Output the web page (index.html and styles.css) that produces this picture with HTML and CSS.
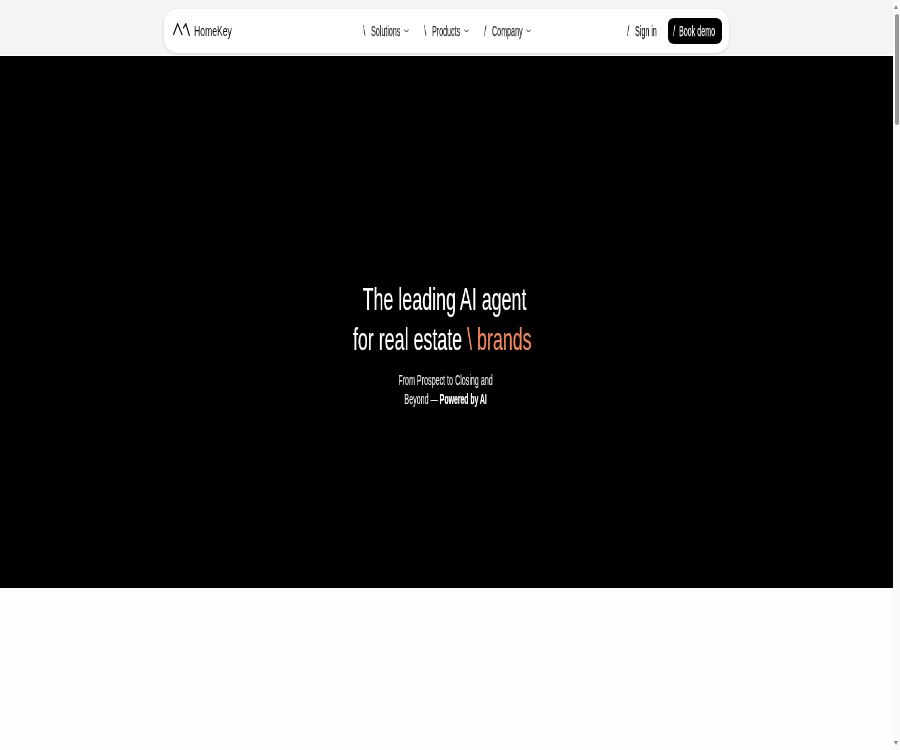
FILE: index.html
```html
<!DOCTYPE html>
<html lang="en">
<head>
    <meta charset="UTF-8">
    <meta name="viewport" content="width=device-width, initial-scale=1.0">
    <title>HomeKey</title>
    <link rel="stylesheet" href="styles.css">
</head>
<body>

<div class="page">
    <header class="top-bar">
        <nav class="nav-card">
            <a class="logo" href="#">
                <svg class="logo-mark" width="17" height="14" viewBox="0 0 17 14" fill="none" stroke="#111" stroke-width="1.2">
                    <path d="M0.4 12 L4.6 0.8 L9.2 12"/>
                    <path d="M10.2 5.4 L12.8 0.8 L16.5 13"/>
                </svg>
                <span class="squeeze logo-text">HomeKey</span>
            </a>
            <ul class="nav-links">
                <li class="nav-item">
                    <span class="slash">\</span>
                    <span class="squeeze w-solutions">Solutions</span>
                    <svg class="chevron" width="5" height="4" viewBox="0 0 5 4" fill="none" stroke="#333"><path d="M0.3 0.6 L2.5 3 L4.7 0.6"/></svg>
                </li>
                <li class="nav-item">
                    <span class="slash">\</span>
                    <span class="squeeze w-products">Products</span>
                    <svg class="chevron" width="5" height="4" viewBox="0 0 5 4" fill="none" stroke="#333"><path d="M0.3 0.6 L2.5 3 L4.7 0.6"/></svg>
                </li>
                <li class="nav-item">
                    <span class="slash">/</span>
                    <span class="squeeze w-company">Company</span>
                    <svg class="chevron" width="5" height="4" viewBox="0 0 5 4" fill="none" stroke="#333"><path d="M0.3 0.6 L2.5 3 L4.7 0.6"/></svg>
                </li>
            </ul>
            <div class="nav-actions">
                <a class="sign-in" href="#">
                    <span class="slash">/</span>
                    <span class="squeeze w-signin">Sign in</span>
                </a>
                <a class="book-demo" href="#">
                    <span class="slash">/</span>
                    <span class="squeeze w-demo">Book demo</span>
                </a>
            </div>
        </nav>
    </header>

    <section class="hero">
        <h1>The leading AI agent<br>for real estate <span class="accent">\ brands</span></h1>
        <p>From Prospect to Closing and<br>Beyond — <strong>Powered by AI</strong></p>
    </section>

    <section class="below"></section>
</div>

<!-- drawn scrollbar, sits over the right edge of the window -->
<div class="scrollbar">
    <span class="arrow-up"></span>
    <span class="thumb"></span>
    <span class="arrow-down"></span>
</div>

</body>
</html>
```

FILE: styles.css
```css
html {
    background: #fdfdfd;
}
body {
    margin: 0;
    font-family: "Liberation Sans", Arial, sans-serif;
    color: #111;
}
.page {
    width: 893px;
}

.top-bar {
    height: 56px;
    background: #f5f3f3;
    border-bottom: 1px solid #fff;
    padding-top: 9px;
    box-sizing: border-box;
}
.nav-card {
    width: 565px;
    height: 44px;
    margin: 0 auto;
    box-sizing: border-box;
    padding: 0 7px 0 9px;
    display: flex;
    align-items: center;
    background: #fff;
    border-radius: 14px;
    box-shadow: 0 1px 3px rgba(0, 0, 0, 0.12);
    font-size: 14px;
}
.logo {
    display: flex;
    align-items: center;
    gap: 4px;
    color: #111;
    text-decoration: none;
}
.logo-mark {
    display: block;
    margin-top: -2px;
}

/* the text in the reference is about half its normal width */
.squeeze {
    display: inline-block;
    white-space: nowrap;
    transform: scaleX(0.51);
    transform-origin: left center;
    will-change: transform;
    -webkit-text-stroke: 0.25px currentColor;
}
.logo-text {
    width: 38px;
    margin-top: -1px;
    font-size: 15px;
    transform: scaleX(0.575);
    -webkit-text-stroke: 0;
}
.w-solutions { width: 29px; }
.w-products { width: 28px; }
.w-company { width: 30px; }
.w-signin { width: 22px; }
.w-demo { width: 36px; }

.slash {
    display: inline-block;
    width: 8px;
    transform: scaleX(0.6);
    transform-origin: left center;
    will-change: transform;
}

.nav-links {
    display: flex;
    gap: 15px;
    list-style: none;
    margin: 0 0 0 131px;
    padding: 0;
}
.nav-item {
    display: flex;
    align-items: center;
    color: #333;
}
.chevron {
    margin-left: 4px;
}

.nav-actions {
    display: flex;
    align-items: center;
    margin-left: auto;
    gap: 11px;
}
.sign-in {
    display: flex;
    align-items: center;
    color: #222;
    text-decoration: none;
}
.book-demo {
    display: flex;
    align-items: center;
    width: 54px;
    height: 26px;
    box-sizing: border-box;
    padding-left: 5px;
    background: #000;
    color: #eee;
    border-radius: 6px;
    text-decoration: none;
}
.book-demo .slash {
    width: 6px;
}

.hero {
    height: 532px;
    box-sizing: border-box;
    padding-top: 223px;
    background: #000;
    color: #fff;
    text-align: center;
}
.hero h1 {
    margin: 0 4px 0 0;
    font-size: 32px;
    font-weight: 400;
    line-height: 40px;
    transform: scaleX(0.558);
    will-change: transform;
    -webkit-text-stroke: 0.2px currentColor;
}
.accent {
    margin-right: 8px;
    color: #f58a5c;
}
.hero p {
    margin: 12px 2px 0 0;
    font-size: 14px;
    line-height: 19px;
    color: #e6e6e6;
    transform: scaleX(0.51);
    will-change: transform;
    -webkit-text-stroke: 0.2px currentColor;
}
.hero strong {
    color: #fff;
    letter-spacing: -0.3px;
}

.below {
    height: 162px;
    background: #fdfdfd;
}

.scrollbar {
    position: fixed;
    top: 0;
    right: 0;
    bottom: 0;
    width: 7px;
    background: #fafafa;
}
.thumb {
    position: absolute;
    top: 14px;
    left: 2px;
    width: 4px;
    height: 111px;
    background: #999;
    border-radius: 2px;
}
.arrow-up,
.arrow-down {
    position: absolute;
    left: 1px;
    width: 0;
    height: 0;
    border-left: 2.5px solid transparent;
    border-right: 2.5px solid transparent;
}
.arrow-up {
    top: 5px;
    border-bottom: 4px solid #888;
}
.arrow-down {
    bottom: 5px;
    border-top: 4px solid #888;
}
```
